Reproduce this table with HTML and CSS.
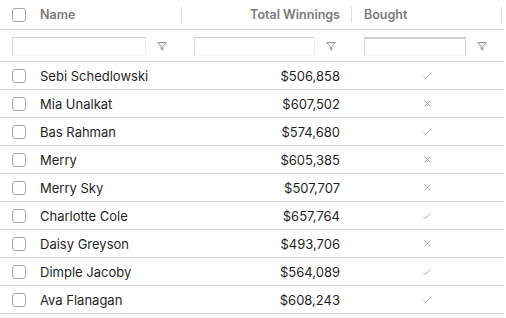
FILE: index.html
```html
<!DOCTYPE html>
<html>
<head>
<meta charset="utf-8">
<link rel="stylesheet" href="styles.css">
</head>
<body>
<div class="grid">
  <div class="row header">
    <div class="hcell">
      <span class="cb"></span><span class="hlabel name-label">Name</span><span class="sep"></span>
    </div>
    <div class="hcell right">
      <span class="hlabel">Total Winnings</span><span class="sep"></span>
    </div>
    <div class="hcell">
      <span class="hlabel">Bought</span><span class="sep"></span>
    </div>
  </div>
  <div class="row filters">
    <div class="fcell fc1"><span class="finput"></span><svg class="funnel" width="10" height="9" viewBox="0 0 10 9"><path d="M0.7 0.7 H9.3 L5.8 4.6 V8.2 L4.2 7.2 V4.6 Z" fill="none" stroke="#8a8a8a" stroke-width="1" stroke-linejoin="round"/></svg></div>
    <div class="fcell fc2"><span class="finput"></span><svg class="funnel" width="10" height="9" viewBox="0 0 10 9"><path d="M0.7 0.7 H9.3 L5.8 4.6 V8.2 L4.2 7.2 V4.6 Z" fill="none" stroke="#8a8a8a" stroke-width="1" stroke-linejoin="round"/></svg></div>
    <div class="fcell fc3"><span class="finput f3"></span><svg class="funnel" width="10" height="9" viewBox="0 0 10 9"><path d="M0.7 0.7 H9.3 L5.8 4.6 V8.2 L4.2 7.2 V4.6 Z" fill="none" stroke="#8a8a8a" stroke-width="1" stroke-linejoin="round"/></svg></div>
  </div>

  <div class="row data"><div class="cell"><span class="cb"></span><span>Sebi Schedlowski</span></div><div class="cell num">$506,858</div><div class="cell icon"><svg width="8" height="6" viewBox="0 0 8 6"><path d="M0.6 3.4 L2.6 5.2 L7.4 0.6" fill="none" stroke="#a0a0a0" stroke-width="0.9"/></svg></div></div>
  <div class="row data"><div class="cell"><span class="cb"></span><span>Mia Unalkat</span></div><div class="cell num">$607,502</div><div class="cell icon"><svg width="7" height="7" viewBox="0 0 7 7"><path d="M0.5 0.5 L6.5 6.5 M6.5 0.5 L0.5 6.5" fill="none" stroke="#a0a0a0" stroke-width="0.9"/></svg></div></div>
  <div class="row data"><div class="cell"><span class="cb"></span><span>Bas Rahman</span></div><div class="cell num">$574,680</div><div class="cell icon"><svg width="8" height="6" viewBox="0 0 8 6"><path d="M0.6 3.4 L2.6 5.2 L7.4 0.6" fill="none" stroke="#a0a0a0" stroke-width="0.9"/></svg></div></div>
  <div class="row data"><div class="cell"><span class="cb"></span><span>Merry</span></div><div class="cell num">$605,385</div><div class="cell icon"><svg width="7" height="7" viewBox="0 0 7 7"><path d="M0.5 0.5 L6.5 6.5 M6.5 0.5 L0.5 6.5" fill="none" stroke="#a0a0a0" stroke-width="0.9"/></svg></div></div>
  <div class="row data"><div class="cell"><span class="cb"></span><span>Merry Sky</span></div><div class="cell num">$507,707</div><div class="cell icon"><svg width="7" height="7" viewBox="0 0 7 7"><path d="M0.5 0.5 L6.5 6.5 M6.5 0.5 L0.5 6.5" fill="none" stroke="#a0a0a0" stroke-width="0.9"/></svg></div></div>
  <div class="row data"><div class="cell"><span class="cb"></span><span>Charlotte Cole</span></div><div class="cell num">$657,764</div><div class="cell icon"><svg width="8" height="6" viewBox="0 0 8 6"><path d="M0.6 3.4 L2.6 5.2 L7.4 0.6" fill="none" stroke="#a0a0a0" stroke-width="0.9"/></svg></div></div>
  <div class="row data"><div class="cell"><span class="cb"></span><span>Daisy Greyson</span></div><div class="cell num">$493,706</div><div class="cell icon"><svg width="7" height="7" viewBox="0 0 7 7"><path d="M0.5 0.5 L6.5 6.5 M6.5 0.5 L0.5 6.5" fill="none" stroke="#a0a0a0" stroke-width="0.9"/></svg></div></div>
  <div class="row data"><div class="cell"><span class="cb"></span><span>Dimple Jacoby</span></div><div class="cell num">$564,089</div><div class="cell icon"><svg width="8" height="6" viewBox="0 0 8 6"><path d="M0.6 3.4 L2.6 5.2 L7.4 0.6" fill="none" stroke="#a0a0a0" stroke-width="0.9"/></svg></div></div>
  <div class="row data"><div class="cell"><span class="cb"></span><span>Ava Flanagan</span></div><div class="cell num">$608,243</div><div class="cell icon"><svg width="8" height="6" viewBox="0 0 8 6"><path d="M0.6 3.4 L2.6 5.2 L7.4 0.6" fill="none" stroke="#a0a0a0" stroke-width="0.9"/></svg></div></div>
</div>
</body>
</html>
```
FILE: styles.css
```css
html, body {
  margin: 0;
  padding: 0;
  background: #ffffff;
}
body {
  font-family: Inter, "Liberation Sans", sans-serif;
  font-size: 13px;
  color: #1f1f1f;
}
.grid {
  width: 504px;
}
.row {
  display: grid;
  grid-template-columns: 182px 170px 150px 2px;
  border-bottom: 1px solid #d8d8d8;
  box-sizing: border-box;
}
.header {
  height: 30px;
}
.filters {
  height: 32px;
}
.data {
  height: 28px;
}
.hcell {
  display: flex;
  align-items: center;
  padding-left: 12px;
  color: #7b7b7b;
  font-weight: 600;
  font-size: 12.5px;
}
.hcell.right {
  justify-content: flex-end;
}
.hcell.right .hlabel {
  margin-right: 11px;
}
.hcell .sep {
  margin-left: auto;
  width: 1px;
  height: 16px;
  background: #dcdcdc;
  margin-right: 0;
}
.hcell.right .sep {
  margin-left: 0;
}
.cb {
  display: inline-block;
  width: 14px;
  height: 14px;
  box-sizing: border-box;
  border: 1px solid #a8a8a8;
  border-radius: 3px;
  background: #fff;
  flex: none;
}
.name-label {
  margin-left: 14px;
}
.fcell {
  display: flex;
  align-items: center;
  padding-left: 12px;
  padding-top: 1px;
}
.finput {
  display: block;
  height: 19px;
  box-sizing: border-box;
  border-top: 1px solid #cfcfcf;
  border-left: 1px solid #d4d4d4;
  border-right: 1px solid #f0f0f0;
  border-bottom: 1px solid #f4f4f4;
  background: #fff;
}
.fc1 .finput { width: 134px; }
.fc2 .finput { width: 121px; }
.fc3 .finput { width: 102px; border-top: 2px solid #d0d0d0; border-right: 1px solid #cfcfcf; }
.funnel {
  margin-left: 11px;
  flex: none;
}
.cell {
  display: flex;
  align-items: center;
}
.cell:first-child {
  padding-left: 12px;
}
.cell:first-child .cb {
  margin-right: 14px;
}
.cell.num {
  justify-content: flex-end;
  padding-right: 12px;
}
.cell.icon {
  justify-content: center;
}
```
